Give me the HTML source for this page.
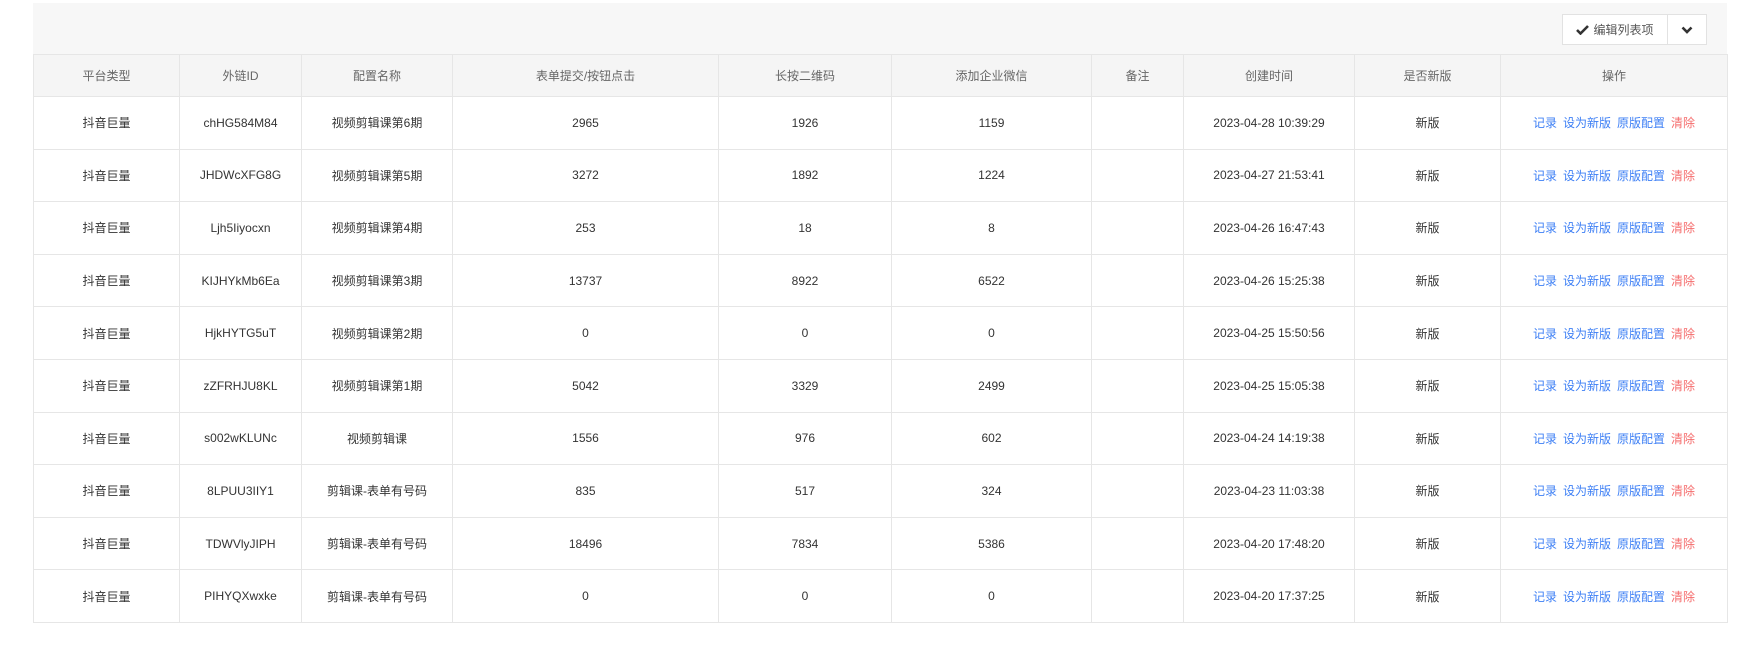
<!DOCTYPE html>
<html><head><meta charset="utf-8"><style>
body{margin:0;width:1739px;height:648px;background:#fff;font-family:"Liberation Sans","Noto Sans CJK SC",sans-serif;font-size:12px;color:#333;overflow:hidden;position:relative}
.bar{position:absolute;left:33px;top:3px;width:1694px;height:51px;background:#f7f7f7}
.btn{position:absolute;top:11px;height:31px;background:#fff;border:1px solid #e2e2e2;box-sizing:border-box;display:flex;align-items:center;justify-content:center;color:#555;font-size:12px}
table{position:absolute;left:33px;top:54px;border-collapse:collapse;table-layout:fixed;width:1694px}
td,th{border:1px solid #e6e6e6;text-align:center;padding:0;white-space:nowrap}
th{height:41px;background:#f5f5f5;font-weight:normal;color:#666}
td{height:51.6px}
.b{color:#3d7ff5}.r{color:#f56c6c}
.op span{margin:0 3px}
</style></head><body>
<div class="bar">
<div class="btn" style="left:1529px;width:106px"><svg width="13" height="11" viewBox="0 0 13 11" style="margin-right:4px"><path d="M1 6l3.5 3.5L12 2" stroke="#333" stroke-width="2.6" fill="none"/></svg>编辑列表项</div>
<div class="btn" style="left:1634px;width:40px"><svg width="12" height="8" viewBox="0 0 12 8"><path d="M1.5 1.5L6 6l4.5-4.5" stroke="#333" stroke-width="2.6" fill="none"/></svg></div>
</div>
<table>
<colgroup><col style="width:146px"><col style="width:122px"><col style="width:151px"><col style="width:266px"><col style="width:173px"><col style="width:200px"><col style="width:92px"><col style="width:171px"><col style="width:146px"><col style="width:227px"></colgroup>
<tr><th>平台类型</th><th>外链ID</th><th>配置名称</th><th>表单提交/按钮点击</th><th>长按二维码</th><th>添加企业微信</th><th>备注</th><th>创建时间</th><th>是否新版</th><th>操作</th></tr>
<tr><td>抖音巨量</td><td>chHG584M84</td><td>视频剪辑课第6期</td><td>2965</td><td>1926</td><td>1159</td><td></td><td>2023-04-28 10:39:29</td><td>新版</td><td class="op"><span class="b">记录</span><span class="b">设为新版</span><span class="b">原版配置</span><span class="r">清除</span></td></tr>
<tr><td>抖音巨量</td><td>JHDWcXFG8G</td><td>视频剪辑课第5期</td><td>3272</td><td>1892</td><td>1224</td><td></td><td>2023-04-27 21:53:41</td><td>新版</td><td class="op"><span class="b">记录</span><span class="b">设为新版</span><span class="b">原版配置</span><span class="r">清除</span></td></tr>
<tr><td>抖音巨量</td><td>Ljh5Iiyocxn</td><td>视频剪辑课第4期</td><td>253</td><td>18</td><td>8</td><td></td><td>2023-04-26 16:47:43</td><td>新版</td><td class="op"><span class="b">记录</span><span class="b">设为新版</span><span class="b">原版配置</span><span class="r">清除</span></td></tr>
<tr><td>抖音巨量</td><td>KIJHYkMb6Ea</td><td>视频剪辑课第3期</td><td>13737</td><td>8922</td><td>6522</td><td></td><td>2023-04-26 15:25:38</td><td>新版</td><td class="op"><span class="b">记录</span><span class="b">设为新版</span><span class="b">原版配置</span><span class="r">清除</span></td></tr>
<tr><td>抖音巨量</td><td>HjkHYTG5uT</td><td>视频剪辑课第2期</td><td>0</td><td>0</td><td>0</td><td></td><td>2023-04-25 15:50:56</td><td>新版</td><td class="op"><span class="b">记录</span><span class="b">设为新版</span><span class="b">原版配置</span><span class="r">清除</span></td></tr>
<tr><td>抖音巨量</td><td>zZFRHJU8KL</td><td>视频剪辑课第1期</td><td>5042</td><td>3329</td><td>2499</td><td></td><td>2023-04-25 15:05:38</td><td>新版</td><td class="op"><span class="b">记录</span><span class="b">设为新版</span><span class="b">原版配置</span><span class="r">清除</span></td></tr>
<tr><td>抖音巨量</td><td>s002wKLUNc</td><td>视频剪辑课</td><td>1556</td><td>976</td><td>602</td><td></td><td>2023-04-24 14:19:38</td><td>新版</td><td class="op"><span class="b">记录</span><span class="b">设为新版</span><span class="b">原版配置</span><span class="r">清除</span></td></tr>
<tr><td>抖音巨量</td><td>8LPUU3IIY1</td><td>剪辑课-表单有号码</td><td>835</td><td>517</td><td>324</td><td></td><td>2023-04-23 11:03:38</td><td>新版</td><td class="op"><span class="b">记录</span><span class="b">设为新版</span><span class="b">原版配置</span><span class="r">清除</span></td></tr>
<tr><td>抖音巨量</td><td>TDWVlyJIPH</td><td>剪辑课-表单有号码</td><td>18496</td><td>7834</td><td>5386</td><td></td><td>2023-04-20 17:48:20</td><td>新版</td><td class="op"><span class="b">记录</span><span class="b">设为新版</span><span class="b">原版配置</span><span class="r">清除</span></td></tr>
<tr><td>抖音巨量</td><td>PIHYQXwxke</td><td>剪辑课-表单有号码</td><td>0</td><td>0</td><td>0</td><td></td><td>2023-04-20 17:37:25</td><td>新版</td><td class="op"><span class="b">记录</span><span class="b">设为新版</span><span class="b">原版配置</span><span class="r">清除</span></td></tr>
</table>
</body></html>
